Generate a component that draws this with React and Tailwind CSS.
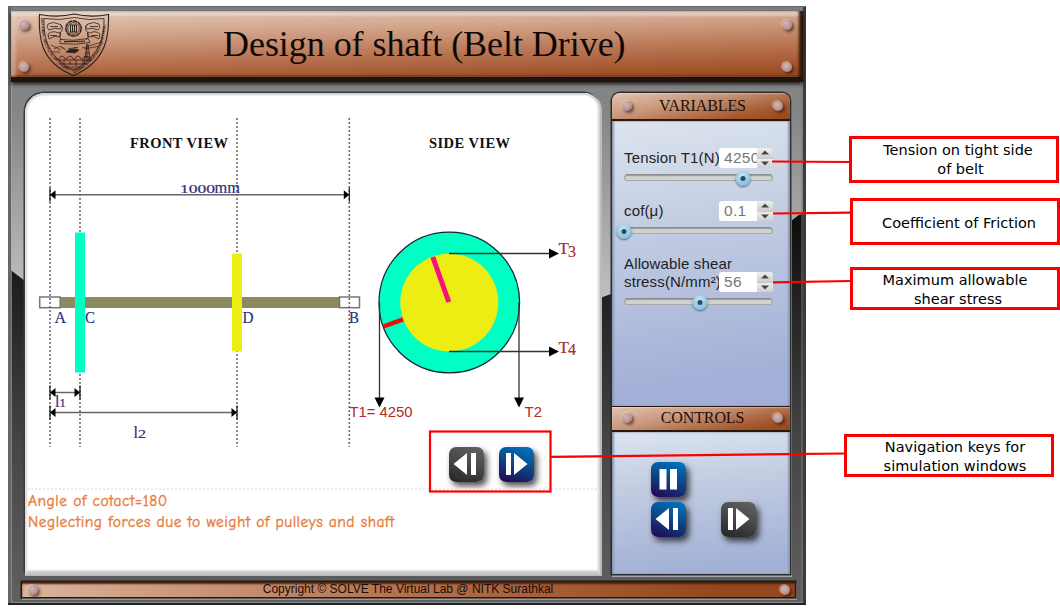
import React from "react";

const copper =
  "bg-[linear-gradient(168deg,#e3c4b1_0%,#c9977b_38%,#a5592f_78%,#96461a_100%)]";

function Rivet({ className = "" }) {
  return (
    <span
      className={`block size-[10px] shrink-0 rounded-full bg-[radial-gradient(circle_at_40%_35%,#d3b6b4_0%,#bb9a9a_50%,#8d6b68_100%)] shadow-[2px_2px_3px_rgba(40,15,5,0.6),-1px_-1px_1px_rgba(255,235,225,0.4)] ${className}`}
    />
  );
}

function Crest() {
  return (
    <svg width="72" height="64" viewBox="38 14 72 64" fill="none" stroke="#2a211d" strokeWidth="0.8">
      <path d="M39.5 15.5 Q58 19 74 15 Q91 19 108.500 15.500 Q109 36 104 48 Q96 67 73.500 76.500 Q50 67 43 48 Q38.500 35 39.500 15.500Z" strokeWidth="1.100" />
      <path d="M44 19.500 Q60 22 74 18.500 Q89 22 104 19.500 Q104.500 35 99.500 46 Q93 60 73.500 71.500 Q54 61 48 46 Q43.500 36 44 19.500Z" />
      <path id="crest-left" d="M40.800 19 Q41 36 46 48 Q53 64 73 74" stroke="none" />
      <path id="crest-right" d="M74 74.500 Q94 64 101 48 Q105.500 36 106 19" stroke="none" />
      <g fill="#2a211d" stroke="none" fontFamily="Liberation Sans, sans-serif" fontSize="3.800" fontWeight="bold">
        <text><textPath href="#crest-left" textLength="62">NATIONAL INSTITUTE OF TECHN</textPath></text>
        <text><textPath href="#crest-right" textLength="62">OLOGY KARNATAKA SURATHKAL</textPath></text>
      </g>
      <circle cx="73.500" cy="29.500" r="7.600" strokeWidth="1.500" strokeDasharray="4.500 0.500" />
      <circle cx="73.500" cy="29.500" r="5.800" />
      <path d="M70.500 26v7M72.500 26v7M74.500 26v7M76.500 26v7M70 26h7M70 33h7" strokeWidth="1" />
      <path d="M48 25q5-3 11 0q4 2 1 5q-5-2-11 1q-3-2-1-6ZM50 27.500h8M48 35q5-4 10-1q4-2 2 4q-6-2-11 2zM50 36.500h7M60 25q5 4 0 9q-2 4 2 7" />
      <path d="M99 25q-5-3-11 0q-4 2-1 5q5-2 11 1q3-2 1-6ZM90 27.500h8M100 35q-5-4-10-1q-4-2-2 4q6-2 11 2zM91 36.500h7M88 25q-5 4 0 9q2 4-2 7" />
      <path d="M60 40.500q13 2 28-1l2 4q-14 3-30 1zM64 42.700l21-.7" />
      <path d="M64 42.600h21" strokeWidth="1.200" strokeDasharray="1.500 1" />
      <path d="M51 46l10 5M54 50q8-5 9 0M82 49l20-6M84 50l16-3M62 48l4 3M52 53h8" strokeWidth="0.700" />
      <path d="M66 53q6-5 13-2l-4 3zM68 50l10-2" fill="#2a211d" />
      <path d="M87 45l-3 21M88 45l2 17M86 49h3M85 54h5M84 58h6M87 45v18" />
      <path d="M56 61h36M58 61q4-8 8 0q4-8 8 0q4-8 8 0q4-8 8 0M60 65h28M64 61v4M76 61v6M70 62v4M83 61v4" />
      <path d="M62 68h22M68 70h12" strokeWidth="0.600" />
    </svg>
  );
}

function KeyIcon({ kind }) {
  return (
    <svg width="35" height="35" viewBox="0 0 35 35" fill="white" className="block">
      {kind === "pause" && <path d="M8.500 7h7v20.500h-7zM19 7h7v20.500h-7z" />}
      {kind === "prev" && <path d="M4.500 17L18 6v22zM22 6h5v22h-5z" />}
      {kind === "next" && <path d="M7 6h5v22H7zM15 6v22l13.500-11z" />}
    </svg>
  );
}

function KeyButton({ kind, tone, label }) {
  const look =
    tone === "blue"
      ? "bg-[linear-gradient(200deg,#0073bd_5%,#0c4789_48%,#240650_98%)]"
      : "bg-[linear-gradient(200deg,#606060_5%,#4a4a4a_45%,#252525_98%)]";
  return (
    <button
      aria-label={label}
      className={`block size-[35px] rounded-[7px] shadow-[3px_4px_6px_rgba(0,0,0,0.7)] ${look}`}
    >
      <KeyIcon kind={kind} />
    </button>
  );
}

function PlateTitle({ children, className = "" }) {
  return (
    <div
      className={`flex h-[26px] items-center justify-between border-b-2 border-[#2c170c] pr-[7px] pl-[10px] text-[16px] leading-none text-[#1a0f0a] shadow-[inset_0_1px_1px_rgba(255,235,220,0.4)] ${copper} ${className}`}
      style={{ fontFamily: '"Liberation Serif", serif' }}
    >
      <Rivet />
      <span className="tracking-[-0.100px]">{children}</span>
      <Rivet />
    </div>
  );
}

function Field({ label, value, percent, className = "" }) {
  return (
    <div className={`w-[149px] ${className}`}>
      <div className="flex items-end">
        <span className="w-[95px] pb-px text-[15px] leading-[18px] tracking-[0.150px] whitespace-pre text-[#1e2226]">
          {label}
        </span>
        <span className="relative flex h-[20px] w-[54px] overflow-hidden rounded-[3px] bg-white">
          <span className="w-[38px] overflow-hidden pl-[5px] text-[15.500px] leading-[20px] tracking-[0.300px] text-[#777]">
            {value}
          </span>
          <span className="flex w-[16px] flex-col gap-px bg-[#c8c8c8]">
            <span className="flex flex-1 items-center justify-center bg-[linear-gradient(#eeeeee,#cfcfcf)]">
              <svg width="8" height="5" viewBox="0 0 8 5"><path d="M0 4.500L4 .5l4 4z" fill="#444" /></svg>
            </span>
            <span className="flex flex-1 items-center justify-center bg-[linear-gradient(#eeeeee,#cfcfcf)]">
              <svg width="8" height="5" viewBox="0 0 8 5"><path d="M0 .5h8l-4 4z" fill="#444" /></svg>
            </span>
          </span>
        </span>
      </div>
      <div className="relative mt-[6px] h-[7px] rounded-[4px] border border-[#a8a8a8] border-t-[#8d8d8d] bg-[#d2d2d2] shadow-[inset_0_1px_1px_#999]">
        <span
          className="absolute -top-[4px] flex size-[15px] -translate-x-1/2 items-center justify-center rounded-full bg-[radial-gradient(circle_at_45%_30%,#c5e5f3,#8fc3de_65%,#6aa3c2)] shadow-[0_1px_2px_rgba(40,70,100,0.8)]"
          style={{ left: `${percent}%` }}
        >
          <span className="size-[5px] rounded-full bg-[#1e4f68]" />
        </span>
      </div>
    </div>
  );
}

function Dimension({ x1, x2, y }) {
  return (
    <g>
      <path d={`M${x1} ${y}H${x2}`} stroke="#666" strokeWidth="1.500" />
      <path d={`M${x1} ${y - 7}v14M${x2} ${y - 7}v14`} stroke="#111" strokeWidth="1.200" />
      <path d={`M${x1} ${y}l5.500-4.500v9zM${x2} ${y}l-5.500-4.500v9z`} fill="#000" />
    </g>
  );
}

function Drawing() {
  return (
    <svg width="575" height="355" viewBox="25 92 575 355" className="block overflow-visible" fontFamily="Liberation Serif, serif">
      <path d="M60 302.500H340" stroke="#8c8a5f" strokeWidth="11" />
      <g fill="white" stroke="#757575" strokeWidth="1.500">
        <rect x="39.700" y="297" width="20.500" height="10.700" />
        <rect x="339.500" y="297" width="20" height="10.700" />
      </g>
      <g stroke="#666" strokeWidth="1.500" strokeDasharray="2 2">
        <path d="M50 118V447M80 118V447M237 118V447M349.300 118V447" />
      </g>
      <rect x="75" y="232.500" width="10" height="140" fill="#00ffc3" />
      <rect x="232" y="253.500" width="10" height="98" fill="#eded13" />
      <Dimension x1={50} x2={349.300} y={194.700} />
      <Dimension x1={50} x2={80} y={392.500} />
      <Dimension x1={50} x2={237} y={412.500} />

      <g fill="#111" fontWeight="bold" fontSize="14.500">
        <text x="130" y="148" textLength="98">FRONT VIEW</text>
        <text x="429" y="148" textLength="81">SIDE VIEW</text>
      </g>
      <g fill="#30307c" fontSize="16" stroke="#30307c" strokeWidth="0.200">
        <text x="180" y="193" textLength="35" lengthAdjust="spacingAndGlyphs" fontSize="12.500">1000</text>
        <text x="214.500" y="193" textLength="25.500" lengthAdjust="spacingAndGlyphs">mm</text>
        <text x="54.500" y="322.500">A</text>
        <text x="85" y="322.500" textLength="10" lengthAdjust="spacingAndGlyphs">C</text>
        <text x="242.500" y="322.500" textLength="11" lengthAdjust="spacingAndGlyphs">D</text>
        <text x="349" y="322.500" textLength="10" lengthAdjust="spacingAndGlyphs">B</text>
        <text x="55" y="407">l<tspan fontSize="12.500">1</tspan></text>
        <text x="133.500" y="438">l</text>
        <text x="138" y="438" fontSize="13" textLength="8" lengthAdjust="spacingAndGlyphs">2</text>
      </g>

      <circle cx="449.300" cy="302.500" r="70.300" fill="#00ffc3" stroke="#123" strokeWidth="1.200" />
      <circle cx="449.300" cy="302.500" r="49" fill="#eded13" />
      <path d="M448.800 302L432.800 257" stroke="#f4127f" strokeWidth="5" />
      <path d="M383.500 326.500L403 319.300" stroke="#fb0505" strokeWidth="4.500" />
      <g stroke="#333" strokeWidth="1.300">
        <path d="M449 253.500H550M449 351.500H550M379.500 302.500V398M519 302.500V398" />
      </g>
      <path d="M549 248.500v10l10-5zM549 346.500v10l10-5zM374.500 397.500h10l-5 10zM514 397.500h10l-5 10z" fill="#000" />
      <g fill="#a82e2e" fontSize="17" stroke="#a82e2e" strokeWidth="0.200">
        <text x="558.500" y="254">T</text>
        <text x="568" y="256.500" fontSize="16">3</text>
        <text x="558.500" y="352.500">T</text>
        <text x="568" y="354.500" fontSize="16">4</text>
      </g>
      <g fill="#b02a2a" fontSize="15" fontFamily="Liberation Sans, sans-serif">
        <text x="349.500" y="417" textLength="63" lengthAdjust="spacingAndGlyphs">T1= 4250</text>
        <text x="524.500" y="417">T2</text>
      </g>
    </svg>
  );
}

function Callout({ children, className = "" }) {
  return (
    <div
      className={`flex flex-col justify-center border-[3px] border-[#fb0000] bg-white text-center text-[14.500px] leading-[18.500px] whitespace-nowrap text-black ${className}`}
      style={{ fontFamily: '"DejaVu Sans", sans-serif' }}
    >
      {children}
    </div>
  );
}

export default function App() {
  return (
    <div
      className="relative flex h-[616px] w-[1060px] overflow-hidden bg-white pt-[6px] pl-2"
      style={{ fontFamily: '"Liberation Sans", sans-serif' }}
    >
      <main className="relative isolate flex h-[599px] w-[798px] shrink-0 flex-col overflow-hidden bg-[#888]">
        <svg className="absolute inset-0 -z-10" width="798" height="599" viewBox="8 6 798 599">
          <defs>
            <linearGradient id="steel" x1="0" y1="0" x2="0" y2="1">
              <stop offset="0" stopColor="#808080" />
              <stop offset="0.350" stopColor="#858585" />
              <stop offset="1" stopColor="#c2c2c2" />
            </linearGradient>
            <linearGradient id="shade" gradientUnits="userSpaceOnUse" x1="0" y1="215" x2="0" y2="600">
              <stop offset="0" stopColor="#0d0d0d" />
              <stop offset="0.200" stopColor="#202020" />
              <stop offset="0.600" stopColor="#464646" />
              <stop offset="1" stopColor="#606060" />
            </linearGradient>
          </defs>
          <rect x="8" y="6" width="798" height="300" fill="url(#steel)" />
          <path d="M8 268L25 281Q300 380 600 298L611 294Q730 260 791 221L799 215L806 213V605H8Z" fill="url(#shade)" />
          <path d="M9.500 6V605" stroke="#666" strokeWidth="3" />
          <path d="M11.500 82V603" stroke="#aaa" strokeOpacity=".6" />
          <path d="M804.500 6V605" stroke="#3c3c3c" strokeWidth="3" />
          <path d="M802 82V603" stroke="#777" strokeWidth="1" />
          <path d="M8 604H806" stroke="#222" strokeWidth="2" />
          <path d="M11 602.500H803" stroke="#888" />
          <path d="M8 6.500H806" stroke="#666" />
        </svg>

        <header
          className={`mx-[3px] mt-[5px] flex h-[71px] shrink-0 items-center border-b-[5px] border-b-[#21120a] shadow-[0_2px_4px_rgba(0,0,0,0.8),inset_-5px_0_3px_-1px_#301509,inset_0_5px_2px_rgba(240,230,225,0.5),inset_5px_0_3px_rgba(240,215,200,0.4),inset_0_-2px_2px_#6e3519] bg-[linear-gradient(178.500deg,#e4c9b9_0%,#d3a78e_28%,#b87452_62%,#9c4b20_95%)]`}
        >
          <div className="flex h-full w-[28px] flex-col items-center justify-between pt-[9px] pr-[3px] pb-[5px]">
            <Rivet />
            <Rivet />
          </div>
          <div className="h-[60px] w-[72px] -translate-y-px -translate-x-px">
            <Crest />
          </div>
          <h1
            className="ml-[112px] flex-1 text-[36px] leading-[40px] tracking-[-0.050px] text-[#0e0907]"
            style={{ fontFamily: '"Liberation Serif", serif' }}
          >
            Design of shaft (Belt Drive)
          </h1>
          <div className="flex h-full w-[28px] flex-col justify-between pt-[9px] pb-[5px] pl-[7px]">
            <Rivet />
            <Rivet />
          </div>
        </header>

        <div className="flex h-[492px] shrink-0 pt-[11px] pl-[17px]">
          <section className="flex h-[481px] w-[575px] shrink-0 flex-col rounded-tl-[20px] rounded-tr-[16px] bg-white shadow-[-1px_-1px_0_0.500px_#3a3a3a,1px_1px_0_1px_#bbb,inset_-2px_0_2px_#d5d5d5,inset_2px_0_2px_#ddd,inset_0_-3px_3px_#bbb,inset_0_2px_2px_#ccc]">
            <div className="-mt-px">
              <Drawing />
            </div>
            <div className="flex h-[41px] gap-[15px] pl-[424px]">
              <KeyButton kind="prev" tone="gray" label="Previous window" />
              <KeyButton kind="next" tone="blue" label="Next window" />
            </div>
            <div
              className="mx-[3px] border-t-2 border-dotted border-[#f3e6e8] pt-px text-[15.500px] leading-[21px] text-[#e87d3e] [-webkit-text-stroke:0.400px_#e87d3e]"
              style={{ fontFamily: '"Comic Neue", "Comic Sans MS", Lato, sans-serif' }}
            >
              <p className="tracking-[0.520px]">Angle of cotact=180</p>
              <p className="tracking-[0.500px]">Neglecting forces due to weight of pulleys and shaft</p>
            </div>
          </section>

          <aside className="ml-[12px] flex h-[481px] w-[178px] shrink-0 flex-col overflow-hidden rounded-t-[8px] shadow-[0_0_0_1.500px_#2c2c2c,1px_2px_0_1px_#aaa]">
            <PlateTitle className="h-[28px]">VARIABLES</PlateTitle>
            <div className="flex h-[285px] flex-col bg-[linear-gradient(172deg,#dce4ee_0%,#c3cee2_35%,#a2afd7_90%)] pt-[27px] pl-[12px] shadow-[inset_2px_0_2px_#8c98b8,inset_-2px_0_2px_#8c98b8]">
              <Field label="Tension T1(N)" value="4250" percent={80} />
              <Field label="cof(μ)" value="0.1" percent={-0.5} className="mt-[20px]" />
              <Field label={"Allowable shear\nstress(N/mm²)"} value="56" percent={51} className="mt-[21px]" />
            </div>
            <PlateTitle className="border-t border-t-[#2c170c] pb-[2px]">CONTROLS</PlateTitle>
            <div className="flex flex-1 flex-col gap-[5px] bg-[linear-gradient(174deg,#dce4ee_0%,#c3cee2_35%,#a3b1d6_90%)] pt-[30px] pl-[39px] shadow-[inset_2px_0_2px_#8c98b8,inset_-2px_0_2px_#8c98b8]">
              <KeyButton kind="pause" tone="blue" label="Pause" />
              <div className="flex gap-[35px]">
                <KeyButton kind="prev" tone="blue" label="Step back" />
                <KeyButton kind="next" tone="gray" label="Step forward" />
              </div>
            </div>
          </aside>
        </div>

        <footer
          className={`mt-[8px] ml-[14px] flex h-[15px] w-[773px] shrink-0 items-center justify-between pr-[5px] pl-[6px] shadow-[0_0_0_1.500px_#1c1c1c,1px_2px_0_1px_#999,inset_0_2px_2px_#4b210e] bg-[linear-gradient(91deg,#dbb39d_0%,#b5704b_50%,#95471d_90%)]`}
        >
          <Rivet />
          <span className="-translate-x-[1px] text-[12px] leading-[15px] text-[#160c07]">
            Copyright © SOLVE The Virtual Lab @ NITK Surathkal
          </span>
          <Rivet />
        </footer>
      </main>

      <div className="flex w-[246px] shrink-0 flex-col pt-[130px] pl-[38px]">
        <Callout className="ml-[5px] h-[47px] w-[210px] pl-[8px]">
          <span>Tension on tight side</span>
          <span className="pl-[5px]">of belt</span>
        </Callout>
        <Callout className="mt-[15px] ml-[6px] h-[47px] w-[210px] pt-[3px] pl-[8px]">
          <span>Coefficient of Friction</span>
        </Callout>
        <Callout className="mt-[22px] ml-[6px] h-[43px] w-[210px] pt-[2px]">
          <span>Maximum allowable</span>
          <span className="pl-[6px]">shear stress</span>
        </Callout>
        <Callout className="mt-[124px] h-[43px] w-[210px] pt-[2px] pl-[12px]">
          <span>Navigation keys for</span>
          <span>simulation windows</span>
        </Callout>
      </div>

      <svg
        className="pointer-events-none absolute inset-0"
        width="1060"
        height="616"
        viewBox="0 0 1060 616"
        fill="none"
        stroke="#fb0000"
        strokeWidth="2.200"
      >
        <path d="M772 161.500L850 162M773 213.500L851 212.700M773 282.300L851 281M551 456.800L845 453.500" />
        <rect x="430" y="431.500" width="120.500" height="60" />
      </svg>
    </div>
  );
}
